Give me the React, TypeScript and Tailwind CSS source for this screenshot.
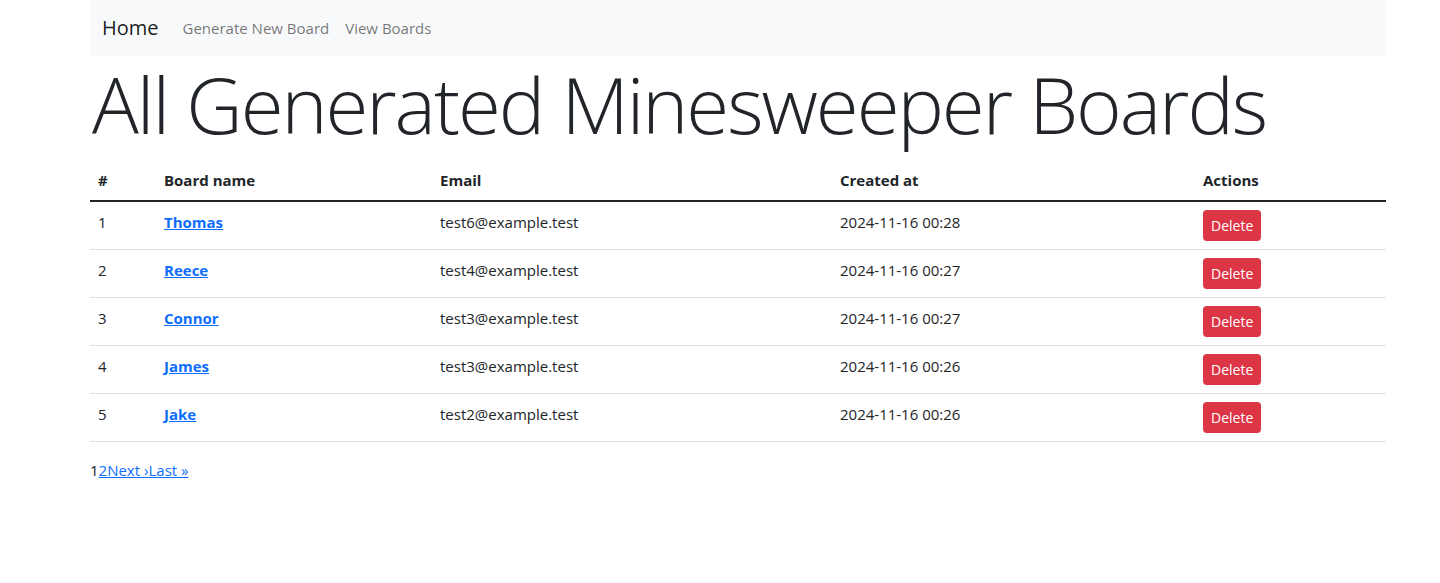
import React from "react"

const boards = [
  { id: 1, name: "Thomas", email: "test6@example.test", created: "2024-11-16 00:28" },
  { id: 2, name: "Reece", email: "test4@example.test", created: "2024-11-16 00:27" },
  { id: 3, name: "Connor", email: "test3@example.test", created: "2024-11-16 00:27" },
  { id: 4, name: "James", email: "test3@example.test", created: "2024-11-16 00:26" },
  { id: 5, name: "Jake", email: "test2@example.test", created: "2024-11-16 00:26" },
]

export default function App() {
  return (
    <div className="min-h-screen bg-white text-[#212529] font-['Open_Sans',sans-serif] text-[15px] leading-6">
      <div className="ml-[90px] w-[1296px]">
        {/* Navbar */}
        <nav className="flex h-14 items-center bg-[#f8f9fa] px-3">
          <a href="#" className="mr-4 text-[20px] leading-[30px] text-black/90">
            Home
          </a>
          <a href="#" className="px-2 text-[15px] text-black/55">
            Generate New Board
          </a>
          <a href="#" className="px-2 text-[15px] text-black/55">
            View Boards
          </a>
        </nav>

        <h1 className="mb-2 pl-[2px] text-[78px] font-light leading-[96px] tracking-[-0.026em]">
          All Generated Minesweeper Boards
        </h1>

        {/* Tabelle */}
        <table className="mb-4 w-full border-collapse text-left">
          <thead>
            <tr className="border-b-2 border-[#212529]">
              <th className="w-[66px] p-2 font-bold">#</th>
              <th className="w-[276px] p-2 font-bold">Board name</th>
              <th className="w-[400px] p-2 font-bold">Email</th>
              <th className="w-[363px] p-2 font-bold">Created at</th>
              <th className="p-2 font-bold">Actions</th>
            </tr>
          </thead>
          <tbody>
            {boards.map((b) => (
              <tr key={b.id} className="border-b border-[#dee2e6]">
                <td className="p-2 align-top">{b.id}</td>
                <td className="p-2 align-top">
                  <a href="#" className="font-bold text-[#0d6efd] underline">
                    {b.name}
                  </a>
                </td>
                <td className="p-2 align-top">{b.email}</td>
                <td className="p-2 align-top">{b.created}</td>
                <td className="p-2 align-top">
                  <button className="block rounded bg-[#dc3545] px-2 py-[5px] text-[14px] leading-[21px] text-white">
                    Delete
                  </button>
                </td>
              </tr>
            ))}
          </tbody>
        </table>

        {/* Seiten */}
        <div>
          <span>1</span>
          <a href="#" className="text-[#0d6efd] underline">2</a>
          <a href="#" className="text-[#0d6efd] underline">Next ›</a>
          <a href="#" className="text-[#0d6efd] underline">Last »</a>
        </div>
      </div>
    </div>
  )
}
